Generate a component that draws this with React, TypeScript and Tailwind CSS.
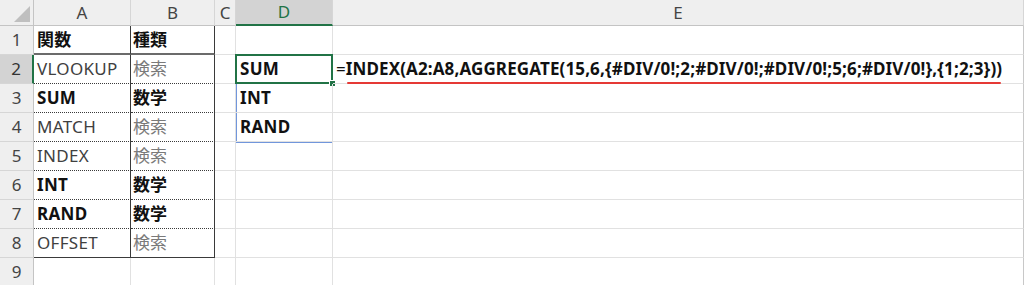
import React from "react";

const FONT = "font-['Noto_Sans','Noto_Sans_CJK_JP',sans-serif]";

// column widths (each includes its 1px right gridline)
const W = ["w-[34px]", "w-[97px]", "w-[84px]", "w-[21px]", "w-[97px]", "w-[691px]"];
const LETTERS = ["A", "B", "C", "D", "E"];

type Row = { a?: string; b?: string; bold?: boolean; d?: string };

const ROWS: Row[] = [
  { a: "関数", b: "種類", bold: true },
  { a: "VLOOKUP", b: "検索", d: "SUM" },
  { a: "SUM", b: "数学", bold: true, d: "INT" },
  { a: "MATCH", b: "検索", d: "RAND" },
  { a: "INDEX", b: "検索" },
  { a: "INT", b: "数学", bold: true },
  { a: "RAND", b: "数学", bold: true },
  { a: "OFFSET", b: "検索" },
  {},
];

const FORMULA =
  "INDEX(A2:A8,AGGREGATE(15,6,{#DIV/0!;2;#DIV/0!;#DIV/0!;5;6;#DIV/0!},{1;2;3}))";

function CornerTriangle() {
  return (
    <svg width="33" height="25" viewBox="0 0 33 25" className="block">
      <polygon points="30,6 30,22 14,22" fill="#bfbfbf" />
    </svg>
  );
}

function HeaderRow() {
  return (
    <div className="flex h-[26px]">
      <div className={`${W[0]} h-full shrink-0 bg-[#efefef] border-r border-b border-[#c4c4c4] flex items-center justify-center`}>
        <CornerTriangle />
      </div>
      {LETTERS.map((l, i) => {
        const sel = l === "D";
        return (
          <div
            key={l}
            className={`${W[i + 1]} h-full shrink-0 flex items-center justify-center text-[17px] border-r border-r-[#d6d6d6] ${
              sel
                ? "bg-[#d3d3d3] text-[#217346] border-b-2 border-b-[#217346]"
                : "bg-[#efefef] text-[#444444] border-b border-b-[#c4c4c4]"
            }`}
          >
            {l}
          </div>
        );
      })}
    </div>
  );
}

function SheetRow({ row, n }: { row: Row; n: number }) {
  const inTable = n >= 1 && n <= 8;
  const selRow = n === 2;

  // bottom edge of the A:B table cells
  let tableBottom = "border-b border-b-[#e1e1e1]";
  if (n === 1) tableBottom = "border-b-2 border-b-[#6b6b6b]";
  else if (n >= 2 && n <= 7) tableBottom = "border-b border-b-[#3a3a3a] [border-bottom-style:dotted]";
  else if (n === 8) tableBottom = "border-b border-b-[#3a3a3a]";

  const sideA = inTable ? "border-r border-r-[#3a3a3a]" : "border-r border-r-[#e1e1e1]";

  const textA = row.bold ? "font-bold text-[#111111]" : "text-[#404040]";
  const textB = row.bold ? "font-bold text-[#111111]" : "text-[#7a7a7a]";

  return (
    <div className="flex h-[29px]">
      <div
        className={`${W[0]} shrink-0 flex items-center justify-center text-[17px] border-b border-b-[#d6d6d6] ${
          selRow
            ? "bg-[#d3d3d3] text-[#333333] border-r-2 border-r-[#217346]"
            : "bg-[#efefef] text-[#444444] border-r border-r-[#c4c4c4]"
        }`}
      >
        {n}
      </div>
      <div className={`${W[1]} shrink-0 flex items-center pl-[3px] text-[17px] tracking-[0.3px] whitespace-nowrap ${sideA} ${tableBottom} ${textA}`}>
        {row.a}
      </div>
      <div className={`${W[2]} shrink-0 flex items-center pl-[2px] text-[17px] whitespace-nowrap ${sideA} ${tableBottom} ${textB}`}>
        {row.b}
      </div>
      <div className={`${W[3]} shrink-0 border-r border-b border-[#e1e1e1]`} />
      <div className={`${W[4]} shrink-0 relative flex items-center pl-[4px] text-[17px] tracking-[0.3px] font-bold text-[#111111] border-r border-b border-[#e1e1e1]`}>
        {row.d}
        {selRow && (
          <>
            {/* spill range outline D2:D4 */}
            <div className="absolute left-0 top-0 w-[97px] h-[88px] border border-[#7196dc] pointer-events-none" />
            {/* active cell */}
            <div className="absolute left-[-1px] top-[-1px] w-[98px] h-[30px] border-2 border-[#217346] pointer-events-none" />
            {/* fill handle */}
            <div className="absolute right-[-4px] bottom-[-4px] w-[7px] h-[7px] bg-[#217346] border border-white" />
          </>
        )}
      </div>
      <div className={`${W[5]} shrink-0 relative flex items-center pl-[3px] text-[17px] whitespace-nowrap text-[#111111] border-r border-r-[#c8c8c8] border-b border-b-[#e1e1e1]`}>
        {selRow && (
          <>
            <span className="font-normal">=</span>
            <span className="font-bold tracking-[0.13px]">{FORMULA}</span>
            <div className="absolute left-[14px] top-[27px] w-[654px] h-[2px] rounded-full bg-[#e53935]" />
          </>
        )}
      </div>
    </div>
  );
}

export default function App() {
  return (
    <div className={`w-[1024px] h-[285px] overflow-hidden bg-white ${FONT}`}>
      <HeaderRow />
      {ROWS.map((r, i) => (
        <SheetRow key={i} row={r} n={i + 1} />
      ))}
    </div>
  );
}
